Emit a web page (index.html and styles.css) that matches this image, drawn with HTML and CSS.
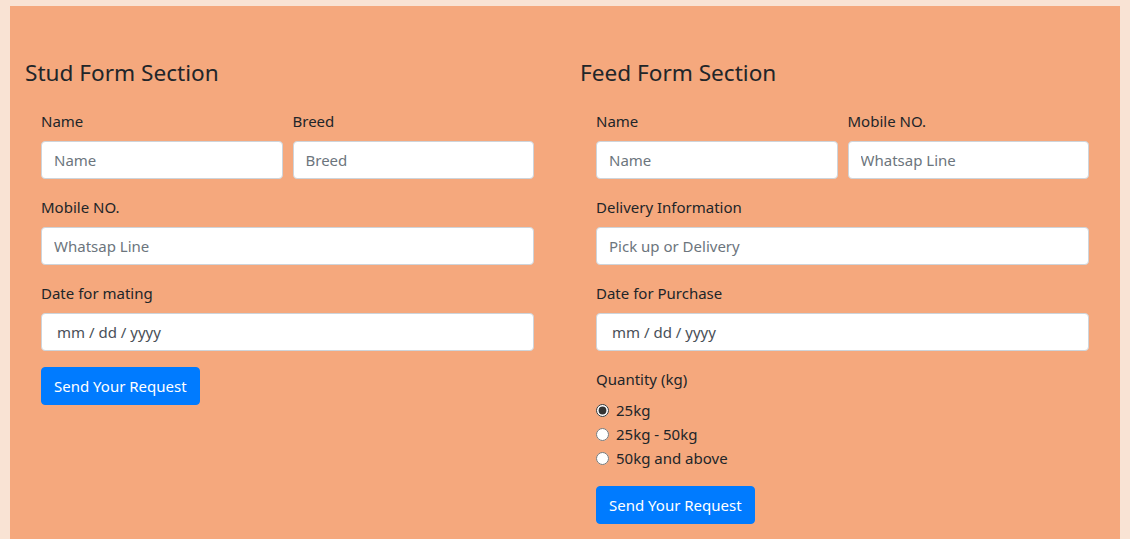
FILE: index.html
```html
<!DOCTYPE html>
<html lang="en">
<head>
<meta charset="utf-8">
<title>Forms</title>
<link rel="stylesheet" href="styles.css">
</head>
<body>
<div class="wrap">
  <section class="col">
    <h4 class="title">Stud Form Section</h4>
    <form class="form">
      <div class="row group">
        <div class="cell">
          <label class="label">Name</label>
          <input class="input" type="text" placeholder="Name">
        </div>
        <div class="cell">
          <label class="label">Breed</label>
          <input class="input" type="text" placeholder="Breed">
        </div>
      </div>
      <div class="group">
        <label class="label">Mobile NO.</label>
        <input class="input" type="text" placeholder="Whatsap Line">
      </div>
      <div class="group">
        <label class="label">Date for mating</label>
        <input class="input date" type="text" placeholder="mm / dd / yyyy">
      </div>
      <button class="btn" type="button">Send Your Request</button>
    </form>
  </section>
  <section class="col">
    <h4 class="title">Feed Form Section</h4>
    <form class="form">
      <div class="row group">
        <div class="cell">
          <label class="label">Name</label>
          <input class="input" type="text" placeholder="Name">
        </div>
        <div class="cell">
          <label class="label">Mobile NO.</label>
          <input class="input" type="text" placeholder="Whatsap Line">
        </div>
      </div>
      <div class="group">
        <label class="label">Delivery Information</label>
        <input class="input" type="text" placeholder="Pick up or Delivery">
      </div>
      <div class="group">
        <label class="label">Date for Purchase</label>
        <input class="input date" type="text" placeholder="mm / dd / yyyy">
      </div>
      <div class="group">
        <label class="label qty">Quantity (kg)</label>
        <label class="radio"><input type="radio" name="q" checked><span>25kg</span></label>
        <label class="radio"><input type="radio" name="q"><span>25kg - 50kg</span></label>
        <label class="radio"><input type="radio" name="q"><span>50kg and above</span></label>
      </div>
      <button class="btn" type="button">Send Your Request</button>
    </form>
  </section>
</div>
</body>
</html>
```
FILE: styles.css
```css
* { box-sizing: border-box; }
html, body { margin: 0; padding: 0; }
body {
  background: #f9e3d4;
  font-family: "Noto Sans", "Open Sans", sans-serif;
  font-size: 15px;
  line-height: 24px;
  color: #212529;
}
.wrap {
  margin: 6px 10px 0;
  background: #f5a87d;
  display: flex;
  padding-top: 53px;
  min-height: calc(100vh - 6px);
}
.col {
  flex: 1 1 0;
  padding: 0 15px;
}
.title {
  margin: 0 0 22px;
  font-size: 22.6px;
  font-weight: 400;
  line-height: 28px;
}
.form { padding: 0 16px; }
.group { margin-bottom: 16px; }
.row { display: flex; gap: 10px; }
.cell { flex: 1 1 0; min-width: 0; }
.label {
  display: block;
  margin-bottom: 8px;
  line-height: 24px;
}
.input {
  display: block;
  width: 100%;
  height: 38px;
  padding: 6px 12px;
  font: inherit;
  color: #495057;
  background: #fff;
  border: 1px solid #ced4da;
  border-radius: 4px;
}
.input::placeholder { color: #6c757d; opacity: 1; }
.date { padding-left: 15px; }
.date::placeholder { color: #495057; }
.qty { margin-bottom: 7px; }
.radio {
  display: flex;
  align-items: center;
  height: 24px;
}
.radio input {
  margin: 0 7px 0 0;
  width: 13px;
  height: 13px;
  accent-color: #333;
}
.btn {
  display: inline-block;
  font: inherit;
  color: #fff;
  background: #007bff;
  border: 1px solid #007bff;
  border-radius: 4px;
  padding: 6px 12px;
  line-height: 24px;
  height: 38px;
}
```
